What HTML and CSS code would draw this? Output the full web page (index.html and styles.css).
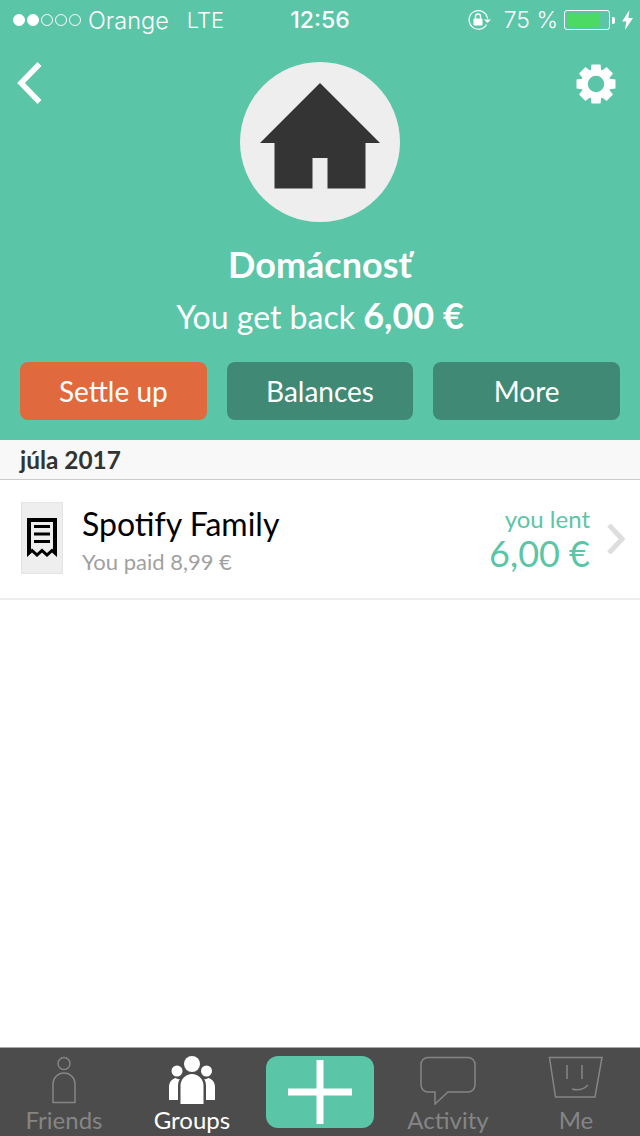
FILE: index.html
```html
<!DOCTYPE html>
<html lang="en">
<head>
<meta charset="utf-8">
<title>Domácnosť</title>
<link rel="stylesheet" href="styles.css">
</head>
<body>
<div class="app">
  <header class="hero">
    <div class="status">
      <div class="status-left">
        <div class="signal"><i class="on"></i><i class="on"></i><i></i><i></i><i></i></div>
        <span class="carrier">Orange</span>
        <span class="net">LTE</span>
      </div>
      <div class="clock">12:56</div>
      <div class="status-right">
        <svg class="lock" width="26" height="22" viewBox="0 0 26 22"><path d="M19.5 15.5A9.3 9.3 0 1 1 20.6 9.6" fill="none" stroke="#fff" stroke-width="1.2"/><path d="M17 10.5h7l-3.5 3.5z" fill="#fff"/><rect x="6.5" y="9.5" width="9" height="7" rx="1" fill="#fff"/><path d="M8.500 9.500V7.500a2.500 2.500 0 0 1 5 0v2" fill="none" stroke="#fff" stroke-width="1.400"/></svg>
        <span class="pct">75 %</span>
        <div class="battery"><div class="battery-fill"></div></div>
        <div class="battery-tip"></div>
        <svg class="bolt" width="11" height="20" viewBox="0 0 11 20"><path d="M7.500 0L0 11.500h4.300L3 20l8-12H6.300z" fill="#fff"/></svg>
      </div>
    </div>
    <div class="top">
      <svg class="back" width="30" height="46" viewBox="0 0 30 46"><path d="M24.500 4L6 23l18.500 19" fill="none" stroke="#fff" stroke-width="5.500"/></svg>
      <div class="avatar">
        <svg width="120" height="106" viewBox="0 0 120 106"><path d="M60 0L120 60H105.500V105.500H67.500V75H52.500V105.500H14.500V60H0Z" fill="#343434"/></svg>
      </div>
      <svg class="gear" width="40" height="40" viewBox="0 0 40 40">
        <g fill="#fff">
          <path d="M15.500 0.500H24.500L25.500 8H14.500ZM15.500 39.500H24.500L25.500 32H14.500Z"/>
          <path d="M15.500 0.500H24.500L25.500 8H14.500ZM15.500 39.500H24.500L25.500 32H14.500Z" transform="rotate(45 20 20)"/>
          <path d="M15.500 0.500H24.500L25.500 8H14.500ZM15.500 39.500H24.500L25.500 32H14.500Z" transform="rotate(90 20 20)"/>
          <path d="M15.500 0.500H24.500L25.500 8H14.500ZM15.500 39.500H24.500L25.500 32H14.500Z" transform="rotate(135 20 20)"/>
        </g>
        <circle cx="20" cy="20" r="11.500" fill="none" stroke="#fff" stroke-width="6.500"/>
      </svg>
    </div>
    <h1 class="title">Domácnosť</h1>
    <p class="balance">You get back <b>6,00 €</b></p>
    <div class="actions">
      <button class="btn btn-settle">Settle up</button>
      <button class="btn">Balances</button>
      <button class="btn">More</button>
    </div>
  </header>
  <div class="month">júla 2017</div>
  <div class="expense">
    <div class="receipt">
      <svg width="30" height="40" viewBox="0 0 30 40"><path d="M0 0H30V39L25 34.500 20 39 15 34.500 10 39 5 34.500 0 39Z" fill="#000"/><path d="M4 4H26V31.500L25 30.500 20 35 15 30.500 10 35 5 30.500 4 31.500Z" fill="#eee"/><path d="M7 8.500H23M7 16H23M7 23.500H23" stroke="#000" stroke-width="3"/></svg>
    </div>
    <div class="info">
      <div class="name">Spotify Family</div>
      <div class="paid">You paid 8,99 €</div>
    </div>
    <div class="lent">
      <div class="lent-label">you lent</div>
      <div class="lent-amount">6,00 €</div>
    </div>
    <svg class="chev" width="18" height="30" viewBox="0 0 18 30"><path d="M2 1L15 15 2 29" fill="none" stroke="#dedede" stroke-width="5"/></svg>
  </div>
  <div class="spacer"></div>
  <nav class="tabs">
    <div class="tab">
      <svg width="40" height="50" viewBox="0 0 40 50"><g fill="none" stroke="#858585" stroke-width="1.500"><circle cx="20" cy="8.500" r="6"/><path d="M9 47.500V29a11 11 0 0 1 22 0V47.500Z"/></g></svg>
      <span>Friends</span>
    </div>
    <div class="tab tab-active">
      <svg width="50" height="50" viewBox="0 0 50 50"><g fill="#fff"><circle cx="25" cy="9" r="8"/><circle cx="10" cy="16" r="5.500"/><circle cx="39.500" cy="16" r="5.500"/><path d="M13.500 49V31a11.500 12 0 0 1 23 0V49Z"/><path d="M2 45V32c0-5 3-8 6.500-9 1.500 1 3 1.500 4.500 1-1.500 2-2 4.500-2 7V45Z"/><path d="M48 45V32c0-5-3-8-6.500-9-1.500 1-3 1.500-4.500 1 1.500 2 2 4.500 2 7V45Z"/></g></svg>
      <span>Groups</span>
    </div>
    <button class="add" aria-label="Add">
      <svg width="64" height="64" viewBox="0 0 64 64"><path d="M0 28.500H64V35.500H0ZM28.500 0H35.500V64H28.500Z" fill="#fff"/></svg>
    </button>
    <div class="tab">
      <svg width="58" height="50" viewBox="0 0 58 50"><path d="M9 2.500H49a7 7 0 0 1 7 7V30a7 7 0 0 1-7 7H29L16 49V37H9a7 7 0 0 1-7-7V9.500a7 7 0 0 1 7-7Z" fill="none" stroke="#858585" stroke-width="1.500"/></svg>
      <span>Activity</span>
    </div>
    <div class="tab">
      <svg width="56" height="50" viewBox="0 0 56 50"><g fill="none" stroke="#858585" stroke-width="1.500"><path d="M1.500 2.500H54L47 42H7.500Z"/><path d="M19 10V24M34 10V24"/><path d="M24 34c5 1.500 11 1 16-4"/></g></svg>
      <span>Me</span>
    </div>
  </nav>
</div>
</body>
</html>
```
FILE: styles.css
```css
* { box-sizing: border-box; }
html, body { margin: 0; padding: 0; }
body { font-family: Lato, "Open Sans", sans-serif; background: #fff; }
.app { width: 640px; height: 1136px; display: flex; flex-direction: column; overflow: hidden; }

.hero { background: #5bc5a7; height: 440px; color: #fff; display: flex; flex-direction: column; flex: none; }

.status { height: 40px; display: flex; justify-content: space-between; align-items: center; padding: 0 7px 0 13px; position: relative; font-family: Inter, sans-serif; font-weight: 300; font-size: 23px; }
.status-left { display: flex; align-items: center; }
.signal { display: flex; gap: 2px; margin-right: 7px; }
.signal i { width: 12px; height: 12px; border: 1px solid #fff; border-radius: 50%; display: block; }
.signal i.on { background: #fff; }
.carrier { font-size: 23.500px; }
.net { margin-left: 18px; font-size: 22px; }
.clock { position: absolute; left: 0; right: 0; text-align: center; font-weight: 500; font-size: 23px; pointer-events: none; }
.status-right { display: flex; align-items: center; }
.lock { margin-right: 11px; }
.pct { margin-right: 6px; }
.battery { width: 46px; height: 20px; border: 1px solid #fff; border-radius: 3px; padding: 2px; }
.battery-fill { width: 32px; height: 100%; background: #4cd964; border-radius: 1px; }
.battery-tip { width: 3px; height: 7px; background: #fff; margin-left: 2px; margin-right: 7px; border-radius: 0 2px 2px 0; }

.top { height: 182px; display: grid; grid-template-columns: 1fr 160px 1fr; padding: 22px 20px 0; }
.back { margin: -2px 0 0 -5px; }
.avatar { width: 160px; height: 160px; border-radius: 50%; background: #eee; display: flex; align-items: center; justify-content: center; padding-bottom: 13px; }
.gear { justify-self: end; margin: 2px 4px 0 0; }

.title { margin: 21px 0 0; font-size: 36px; line-height: 42px; font-weight: 700; text-align: center; }
.balance { margin: 9px 0 0; font-size: 32px; line-height: 42px; font-weight: 400; text-align: center; }
.balance b { font-size: 36px; font-weight: 700; }

.actions { display: grid; grid-template-columns: repeat(3, 1fr); gap: 20px; padding: 0 20px; margin-top: 24px; }
.btn { height: 58px; border: 0; border-radius: 8px; background: #408a75; color: #fff; font-family: inherit; font-size: 28px; padding: 0; }
.btn-settle { background: #e0693e; }

.month { height: 40px; background: #f8f8f8; border-bottom: 1px solid #ccc; padding-left: 20px; font-size: 24.400px; font-weight: 700; line-height: 40px; color: #333; flex: none; }

.expense { height: 120px; display: flex; align-items: center; padding: 0 15px 0 21px; border-bottom: 2px solid #eee; flex: none; }
.receipt { width: 42px; height: 72px; background: #eee; border: 1px solid #e4e4e4; display: flex; align-items: center; justify-content: center; margin: 0 19px 2px 0; }
.info { flex: 1; margin-top: 2px; }
.name { font-size: 32px; line-height: 40px; color: #000; }
.paid { font-size: 22px; line-height: 28px; color: #a0a0a0; margin-top: 4px; }
.lent { text-align: right; color: #5bc5a7; margin-right: 17px; }
.lent-label { font-size: 24px; line-height: 28px; margin-top: -2px; }
.lent-amount { font-size: 36px; line-height: 38px; margin-top: 1px; }

.spacer { flex: 1; }

.tabs { height: 89px; background: #4c4c4c; border-top: 1px solid #aaa; display: grid; grid-template-columns: repeat(5, 128px); flex: none; }
.tab { display: flex; flex-direction: column; align-items: center; color: #858585; font-size: 24px; line-height: 26px; padding-top: 7px; }
.tab svg { display: block; flex: none; }
.tab span { margin-top: 2px; }
.tab-active { color: #fff; }
.add { justify-self: center; margin-top: 8px; width: 108px; height: 72px; border: 0; background: #5bc5a7; border-radius: 12px; display: flex; align-items: center; justify-content: center; padding: 0; }
```
